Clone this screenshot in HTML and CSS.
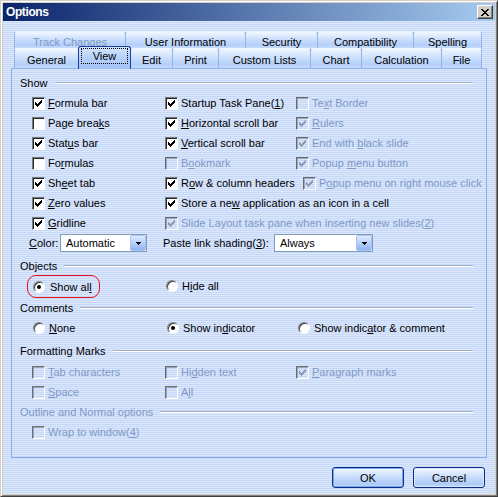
FILE: index.html
```html
<!DOCTYPE html>
<html lang="en">
<head>
    <meta charset="UTF-8">
    <title>Options</title>
    <link rel="stylesheet" href="styles.css">
</head>
<body>
    <div class="window">
        <div class="titlebar">
            <span class="title">Options</span>
            <button class="close-btn">
                <svg width="8" height="7" viewBox="0 0 8 7" shape-rendering="crispEdges">
                    <path d="M0 0h2v1h-2zM6 0h2v1h-2zM1 1h2v1h-2zM5 1h2v1h-2zM2 2h4v1h-4zM3 3h2v1h-2zM2 4h4v1h-4zM1 5h2v1h-2zM5 5h2v1h-2zM0 6h2v1h-2zM6 6h2v1h-2z" fill="#000"/>
                </svg>
            </button>
        </div>

        <div class="client">
            <div class="tabs">
                <div class="tab-row tab-row-back">
                    <div class="tab tab-track disabled">Track Changes</div>
                    <div class="tab tab-user">User Information</div>
                    <div class="tab tab-security">Security</div>
                    <div class="tab tab-compat">Compatibility</div>
                    <div class="tab tab-spelling">Spelling</div>
                </div>
                <div class="tab-row tab-row-front">
                    <div class="tab tab-general">General</div>
                    <div class="tab tab-view active"><span class="focus">View</span></div>
                    <div class="tab tab-edit">Edit</div>
                    <div class="tab tab-print">Print</div>
                    <div class="tab tab-lists">Custom Lists</div>
                    <div class="tab tab-chart">Chart</div>
                    <div class="tab tab-calc">Calculation</div>
                    <div class="tab tab-file">File</div>
                </div>
            </div>

            <div class="panel">
                <div class="group-label"><span>Show</span><i class="rule"></i></div>
                <div class="opt-grid">
                    <div class="opt"><span class="check on"><svg viewBox="0 0 7 7" shape-rendering="crispEdges"><polygon points="6,0 7,0 7,3 6,3 6,4 5,4 5,5 4,5 4,6 3,6 3,7 2,7 2,6 1,6 1,5 0,5 0,2 1,2 1,3 2,3 2,4 3,4 3,3 4,3 4,2 5,2 5,1 6,1"/></svg></span><span><u>F</u>ormula bar</span></div>
                    <div class="opt"><span class="check on"><svg viewBox="0 0 7 7" shape-rendering="crispEdges"><polygon points="6,0 7,0 7,3 6,3 6,4 5,4 5,5 4,5 4,6 3,6 3,7 2,7 2,6 1,6 1,5 0,5 0,2 1,2 1,3 2,3 2,4 3,4 3,3 4,3 4,2 5,2 5,1 6,1"/></svg></span><span>Startup Task Pane(<u>1</u>)</span></div>
                    <div class="opt disabled"><span class="check"></span><span>Te<u>x</u>t Border</span></div>

                    <div class="opt"><span class="check"></span><span>Page brea<u>k</u>s</span></div>
                    <div class="opt"><span class="check on"><svg viewBox="0 0 7 7" shape-rendering="crispEdges"><polygon points="6,0 7,0 7,3 6,3 6,4 5,4 5,5 4,5 4,6 3,6 3,7 2,7 2,6 1,6 1,5 0,5 0,2 1,2 1,3 2,3 2,4 3,4 3,3 4,3 4,2 5,2 5,1 6,1"/></svg></span><span><u>H</u>orizontal scroll bar</span></div>
                    <div class="opt disabled"><span class="check on"><svg viewBox="0 0 7 7" shape-rendering="crispEdges"><polygon points="6,0 7,0 7,3 6,3 6,4 5,4 5,5 4,5 4,6 3,6 3,7 2,7 2,6 1,6 1,5 0,5 0,2 1,2 1,3 2,3 2,4 3,4 3,3 4,3 4,2 5,2 5,1 6,1"/></svg></span><span><u>R</u>ulers</span></div>

                    <div class="opt"><span class="check on"><svg viewBox="0 0 7 7" shape-rendering="crispEdges"><polygon points="6,0 7,0 7,3 6,3 6,4 5,4 5,5 4,5 4,6 3,6 3,7 2,7 2,6 1,6 1,5 0,5 0,2 1,2 1,3 2,3 2,4 3,4 3,3 4,3 4,2 5,2 5,1 6,1"/></svg></span><span>Stat<u>u</u>s bar</span></div>
                    <div class="opt"><span class="check on"><svg viewBox="0 0 7 7" shape-rendering="crispEdges"><polygon points="6,0 7,0 7,3 6,3 6,4 5,4 5,5 4,5 4,6 3,6 3,7 2,7 2,6 1,6 1,5 0,5 0,2 1,2 1,3 2,3 2,4 3,4 3,3 4,3 4,2 5,2 5,1 6,1"/></svg></span><span><u>V</u>ertical scroll bar</span></div>
                    <div class="opt disabled"><span class="check on"><svg viewBox="0 0 7 7" shape-rendering="crispEdges"><polygon points="6,0 7,0 7,3 6,3 6,4 5,4 5,5 4,5 4,6 3,6 3,7 2,7 2,6 1,6 1,5 0,5 0,2 1,2 1,3 2,3 2,4 3,4 3,3 4,3 4,2 5,2 5,1 6,1"/></svg></span><span>End with <u>b</u>lack slide</span></div>

                    <div class="opt"><span class="check"></span><span>Fo<u>r</u>mulas</span></div>
                    <div class="opt disabled"><span class="check"></span><span>B<u>o</u>okmark</span></div>
                    <div class="opt disabled"><span class="check on"><svg viewBox="0 0 7 7" shape-rendering="crispEdges"><polygon points="6,0 7,0 7,3 6,3 6,4 5,4 5,5 4,5 4,6 3,6 3,7 2,7 2,6 1,6 1,5 0,5 0,2 1,2 1,3 2,3 2,4 3,4 3,3 4,3 4,2 5,2 5,1 6,1"/></svg></span><span>Popup <u>m</u>enu button</span></div>

                    <div class="opt"><span class="check on"><svg viewBox="0 0 7 7" shape-rendering="crispEdges"><polygon points="6,0 7,0 7,3 6,3 6,4 5,4 5,5 4,5 4,6 3,6 3,7 2,7 2,6 1,6 1,5 0,5 0,2 1,2 1,3 2,3 2,4 3,4 3,3 4,3 4,2 5,2 5,1 6,1"/></svg></span><span>Sh<u>e</u>et tab</span></div>
                    <div class="opt"><span class="check on"><svg viewBox="0 0 7 7" shape-rendering="crispEdges"><polygon points="6,0 7,0 7,3 6,3 6,4 5,4 5,5 4,5 4,6 3,6 3,7 2,7 2,6 1,6 1,5 0,5 0,2 1,2 1,3 2,3 2,4 3,4 3,3 4,3 4,2 5,2 5,1 6,1"/></svg></span><span>R<u>o</u>w &amp; column headers</span></div>
                    <div class="opt disabled indent"><span class="check on"><svg viewBox="0 0 7 7" shape-rendering="crispEdges"><polygon points="6,0 7,0 7,3 6,3 6,4 5,4 5,5 4,5 4,6 3,6 3,7 2,7 2,6 1,6 1,5 0,5 0,2 1,2 1,3 2,3 2,4 3,4 3,3 4,3 4,2 5,2 5,1 6,1"/></svg></span><span>P<u>o</u>pup menu on right mouse click</span></div>

                    <div class="opt"><span class="check on"><svg viewBox="0 0 7 7" shape-rendering="crispEdges"><polygon points="6,0 7,0 7,3 6,3 6,4 5,4 5,5 4,5 4,6 3,6 3,7 2,7 2,6 1,6 1,5 0,5 0,2 1,2 1,3 2,3 2,4 3,4 3,3 4,3 4,2 5,2 5,1 6,1"/></svg></span><span><u>Z</u>ero values</span></div>
                    <div class="opt span2"><span class="check on"><svg viewBox="0 0 7 7" shape-rendering="crispEdges"><polygon points="6,0 7,0 7,3 6,3 6,4 5,4 5,5 4,5 4,6 3,6 3,7 2,7 2,6 1,6 1,5 0,5 0,2 1,2 1,3 2,3 2,4 3,4 3,3 4,3 4,2 5,2 5,1 6,1"/></svg></span><span>Store a ne<u>w</u> application as an icon in a cell</span></div>

                    <div class="opt"><span class="check on"><svg viewBox="0 0 7 7" shape-rendering="crispEdges"><polygon points="6,0 7,0 7,3 6,3 6,4 5,4 5,5 4,5 4,6 3,6 3,7 2,7 2,6 1,6 1,5 0,5 0,2 1,2 1,3 2,3 2,4 3,4 3,3 4,3 4,2 5,2 5,1 6,1"/></svg></span><span><u>G</u>ridline</span></div>
                    <div class="opt span2 disabled"><span class="check on"><svg viewBox="0 0 7 7" shape-rendering="crispEdges"><polygon points="6,0 7,0 7,3 6,3 6,4 5,4 5,5 4,5 4,6 3,6 3,7 2,7 2,6 1,6 1,5 0,5 0,2 1,2 1,3 2,3 2,4 3,4 3,3 4,3 4,2 5,2 5,1 6,1"/></svg></span><span>Slide Layout task pane when inserting new slides(<u>2</u>)</span></div>
                </div>

                <div class="color-row">
                    <span class="color-label"><u>C</u>olor:</span>
                    <div class="combo combo-color">
                        <span>Automatic</span>
                        <span class="drop"><svg width="5" height="3" viewBox="0 0 5 3" shape-rendering="crispEdges"><polygon points="0,0 5,0 5,1 4,1 4,2 3,2 3,3 2,3 2,2 1,2 1,1 0,1"/></svg></span>
                    </div>
                    <span class="shade-label">Paste link shading(<u>3</u>):</span>
                    <div class="combo combo-shade">
                        <span>Always</span>
                        <span class="drop"><svg width="5" height="3" viewBox="0 0 5 3" shape-rendering="crispEdges"><polygon points="0,0 5,0 5,1 4,1 4,2 3,2 3,3 2,3 2,2 1,2 1,1 0,1"/></svg></span>
                    </div>
                </div>

                <div class="group-label group-objects"><span>Objects</span><i class="rule"></i></div>
                <div class="opt-grid">
                    <div class="ring"><span class="radio on"></span><span>Show al<u>l</u></span></div>
                    <div class="opt radio-opt"><span class="radio"></span><span>H<u>i</u>de all</span></div>
                </div>

                <div class="group-label group-comments"><span>Comments</span><i class="rule"></i></div>
                <div class="opt-grid">
                    <div class="opt radio-opt"><span class="radio"></span><span><u>N</u>one</span></div>
                    <div class="opt radio-opt shift"><span class="radio on"></span><span>Show in<u>d</u>icator</span></div>
                    <div class="opt radio-opt shift"><span class="radio"></span><span>Show indic<u>a</u>tor &amp; comment</span></div>
                </div>

                <div class="group-label group-marks"><span>Formatting Marks</span><i class="rule"></i></div>
                <div class="opt-grid marks">
                    <div class="opt disabled"><span class="check"></span><span><u>T</u>ab characters</span></div>
                    <div class="opt disabled"><span class="check"></span><span>Hi<u>d</u>den text</span></div>
                    <div class="opt disabled"><span class="check on"><svg viewBox="0 0 7 7" shape-rendering="crispEdges"><polygon points="6,0 7,0 7,3 6,3 6,4 5,4 5,5 4,5 4,6 3,6 3,7 2,7 2,6 1,6 1,5 0,5 0,2 1,2 1,3 2,3 2,4 3,4 3,3 4,3 4,2 5,2 5,1 6,1"/></svg></span><span><u>P</u>aragraph marks</span></div>
                    <div class="opt disabled"><span class="check"></span><span><u>S</u>pace</span></div>
                    <div class="opt disabled"><span class="check"></span><span>A<u>l</u>l</span></div>
                </div>

                <div class="group-label disabled"><span>Outline and Normal options</span><i class="rule"></i></div>
                <div class="opt-grid">
                    <div class="opt disabled wide"><span class="check"></span><span>Wrap to window(<u>4</u>)</span></div>
                </div>
            </div>

            <div class="buttons">
                <button class="btn btn-default">OK</button>
                <button class="btn">Cancel</button>
            </div>
        </div>
    </div>
</body>
</html>
```

FILE: styles.css
```css
* {
    margin: 0;
    padding: 0;
    box-sizing: border-box;
}

body {
    font-family: "Liberation Sans", Arial, sans-serif;
    font-size: 11px;
    color: #000;
    background: #fff;
}

.window {
    width: 498px;
    height: 497px;
    display: flex;
    flex-direction: column;
    padding: 2px;
    background: #d4d0c8;
    border: 1px solid;
    border-color: #d4d0c8 #404040 #404040 #d4d0c8;
    box-shadow: inset 1px 1px #fff, inset -1px -1px #808080;
}

.titlebar {
    height: 18px;
    display: flex;
    align-items: center;
    justify-content: space-between;
    padding: 0 2px 0 3px;
    background: linear-gradient(to right, #0a246a, #a6caf0);
}

.title {
    color: #fff;
    font-weight: 700;
    font-size: 12px;
    letter-spacing: -0.4px;
}

.close-btn {
    width: 16px;
    height: 14px;
    display: flex;
    align-items: center;
    justify-content: center;
    background: #d4d0c8;
    border: 1px solid;
    border-color: #fff #404040 #404040 #fff;
    box-shadow: inset -1px -1px #808080;
}

.close-btn svg {
    display: block;
}

.client {
    flex: 1;
    padding: 10px 8px 0 8px;
    background: repeating-linear-gradient(to bottom, #dce7fc 0, #dce7fc 1px, #c6d8f7 1px, #c6d8f7 2px);
}

/* tabs */
.tabs {
    margin-left: 3px;
}

.tab-row {
    display: flex;
    align-items: flex-start;
}

.tab-row-back {
    height: 17px;
}

.tab-row-front {
    height: 20px;
}

.tab {
    height: 100%;
    margin-right: -1px;
    display: flex;
    justify-content: center;
    padding-top: 4px;
    line-height: 12px;
    white-space: nowrap;
    border: 1px solid #92b4ea;
    border-bottom: none;
    border-top-color: #eef5ff;
    border-radius: 3px 3px 0 0;
    background: linear-gradient(#f2f7ff, #d3e4fd 35%, #b3cff9 80%, #c6dbfb);
}

.tab-row-front .tab {
    padding-top: 5px;
}

.tab.disabled {
    color: #7f98c7;
}

.tab-track { width: 112px; }
.tab-user { width: 121px; }
.tab-security { width: 73px; }
.tab-compat { width: 97px; }
.tab-spelling { width: 69px; }

.tab-general { width: 65px; }
.tab-view { width: 53px; }
.tab-edit { width: 43px; }
.tab-print { width: 47px; }
.tab-lists { width: 93px; }
.tab-chart { width: 52px; }
.tab-calc { width: 81px; }
.tab-file { width: 41px; }

.tab-row-front .tab.active {
    position: relative;
    z-index: 1;
    height: 23px;
    margin-top: -2px;
    padding-top: 1px;
    border-color: #1b3c99;
    background: linear-gradient(#d5e6fe, #b4d0fa 50%, #a2c3f7);
}

.focus {
    width: 47px;
    height: 16px;
    display: flex;
    align-items: center;
    justify-content: center;
    border: 1px dotted #000;
}

/* panel */
.panel {
    height: 390px;
    padding: 4px 13px 0 8px;
    border: 1px solid #88ade9;
}

.group-label {
    height: 20px;
    display: flex;
    align-items: center;
}

.group-label .rule {
    flex: 1;
    height: 2px;
    margin-left: 7px;
    border-top: 1px solid #a2acc0;
    border-bottom: 1px solid #fff;
}

.group-objects {
    margin-top: 3px;
}

.group-comments {
    margin-top: 2px;
}

.group-marks {
    margin-top: 3px;
}

.disabled {
    color: #7f98c7;
}

.opt-grid {
    display: grid;
    grid-template-columns: 133px 131px 1fr;
    grid-auto-rows: 20px;
    padding-left: 12px;
}

.marks {
    margin-top: 1px;
}

.opt {
    display: flex;
    align-items: center;
    gap: 3px;
    white-space: nowrap;
}

.span2 {
    grid-column: 2 / 4;
}

.wide {
    grid-column: 1 / 4;
}

.indent {
    margin-left: 7px;
}

.check {
    width: 13px;
    height: 13px;
    flex: none;
    padding: 2px;
    background: #fff;
    border: 1px solid;
    border-color: #7a7a7a #fff #fff #7a7a7a;
    box-shadow: inset 1px 1px #262626;
}

.check svg {
    display: block;
    width: 7px;
    height: 7px;
    fill: #000;
}

.disabled .check {
    background: transparent;
    border-color: #6b6b6b #fff #fff #6b6b6b;
    box-shadow: inset 1px 1px #9aa6bc;
}

.disabled .check svg {
    fill: #8e9bb5;
}

/* color row */
.color-row {
    height: 20px;
    display: flex;
    align-items: center;
    padding-left: 9px;
}

.color-label {
    width: 31px;
}

.shade-label {
    width: 111px;
    margin-left: 16px;
}

.combo {
    height: 18px;
    display: flex;
    align-items: center;
    padding-left: 5px;
    background: #fff;
    border: 1px solid #7f9db9;
}

.combo-color {
    width: 87px;
}

.combo-shade {
    width: 99px;
}

.drop {
    width: 16px;
    height: 16px;
    margin-left: auto;
    display: flex;
    align-items: center;
    justify-content: center;
    border: 1px solid #a9c3ee;
    border-radius: 2px;
    background: linear-gradient(#e0ebfe, #b9d2fa 45%, #8fb4f2);
}

.drop svg {
    display: block;
    fill: #000;
}

/* radios */
.radio {
    width: 12px;
    height: 12px;
    flex: none;
    display: flex;
    align-items: center;
    justify-content: center;
    border-radius: 50%;
    background: #fff;
    border: 1px solid;
    border-color: #808080 #fff #fff #808080;
    box-shadow: inset 1px 1px #404040;
}

.radio.on::after {
    content: "";
    width: 4px;
    height: 4px;
    border-radius: 50%;
    background: #000;
}

.radio-opt {
    gap: 4px;
    margin-left: 1px;
}

.radio-opt.shift {
    margin-left: 2px;
}

.ring {
    width: 73px;
    height: 23px;
    margin: -1px 0 0 -5px;
    padding-left: 5px;
    display: flex;
    align-items: center;
    gap: 5px;
    border: 1px solid #e8101c;
    border-radius: 9px;
}

/* buttons */
.buttons {
    display: flex;
    justify-content: flex-end;
    gap: 9px;
    margin-top: 9px;
    padding-right: 2px;
}

.btn {
    width: 72px;
    height: 21px;
    font-family: inherit;
    font-size: 11px;
    color: #000;
    border: 1px solid #0d2f86;
    border-radius: 3px;
    background: linear-gradient(#fdfeff, #e2edfe 18%, #c7dbfb 50%, #adcaf7 85%, #c9dcfb);
    box-shadow: inset 0 0 0 1px #d8e6fd;
}

.btn-default {
    box-shadow: inset 0 0 0 1px #7aa6ee;
}
```
